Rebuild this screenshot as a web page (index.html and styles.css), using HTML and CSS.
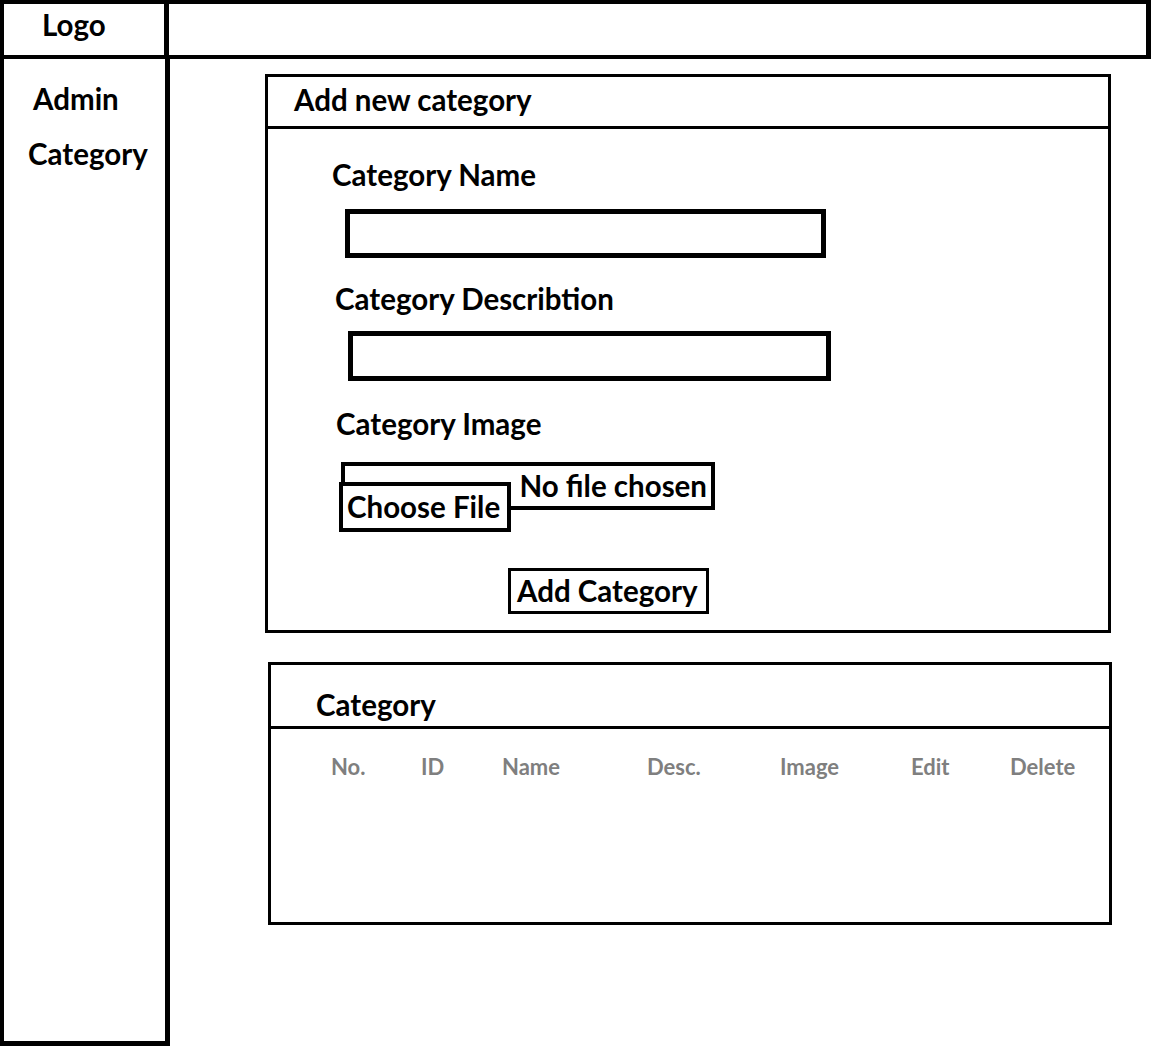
FILE: index.html
```html
<!DOCTYPE html>
<html>
<head>
    <title>Admin - Category</title>
    <link rel="stylesheet" href="styles.css">
</head>
<body>
    <div class="page">
        <header class="top">
            <div class="logo">Logo</div>
            <div class="top-bar"></div>
        </header>
        <div class="main">
            <nav class="sidebar">
                <a class="nav-item nav-admin">Admin</a>
                <a class="nav-item nav-category">Category</a>
            </nav>
            <main class="content">
                <section class="card card-form">
                    <h2 class="card-title">Add new category</h2>
                    <form class="card-body" id="categoryForm">
                        <label class="field-label label-name" for="categoryName">Category Name</label>
                        <input class="text-box box-name" type="text" id="categoryName" name="name">
                        <label class="field-label label-desc" for="categoryDesc">Category Describtion</label>
                        <input class="text-box box-desc" type="text" id="categoryDesc" name="description">
                        <label class="field-label label-image" for="categoryImage">Category Image</label>
                        <div class="file-field">
                            <div class="file-name">No file chosen</div>
                            <div class="file-btn">Choose File</div>
                        </div>
                        <button class="submit-btn" type="submit">Add Category</button>
                    </form>
                </section>
                <section class="card card-list">
                    <h2 class="card-title">Category</h2>
                    <div class="table-head">
                        <span>No.</span>
                        <span>ID</span>
                        <span>Name</span>
                        <span>Desc.</span>
                        <span>Image</span>
                        <span>Edit</span>
                        <span>Delete</span>
                    </div>
                </section>
            </main>
        </div>
    </div>
</body>
</html>
```

FILE: styles.css
```css
* {
    box-sizing: border-box;
}
body {
    margin: 0;
    font-family: Lato, "Open Sans", sans-serif;
    font-weight: bold;
    color: #000;
    background-color: #fff;
}
.page {
    width: 1151px;
}
.top {
    display: flex;
    height: 59px;
}
.logo {
    width: 169px;
    border: 4px solid #000;
    border-right-width: 5px;
    padding: 4px 0 0 38px;
    font-size: 29.5px;
    line-height: 34px;
}
.top-bar {
    flex: 1;
    border: 4px solid #000;
    border-left: 0;
    border-right-width: 5px;
}
.main {
    display: flex;
}
.sidebar {
    width: 170px;
    height: 987px;
    border: 4px solid #000;
    border-top: 0;
    border-right-width: 5px;
    border-bottom-width: 5px;
    display: flex;
    flex-direction: column;
    padding-top: 23px;
}
.nav-item {
    font-size: 29.5px;
    line-height: 34px;
}
.nav-admin {
    padding-left: 29px;
}
.nav-category {
    padding-left: 24px;
    margin-top: 21px;
}
.content {
    padding: 15px 0 0 95px;
}
.card {
    border: 3px solid #000;
}
.card-title {
    margin: 0;
    font-size: 29.5px;
    line-height: 34px;
    border-bottom: 3px solid #000;
}
.card-form {
    width: 846px;
    height: 559px;
}
.card-form .card-title {
    padding: 6px 0 9px 26px;
}
.card-body {
    display: flex;
    flex-direction: column;
    align-items: flex-start;
}
.field-label {
    font-size: 29.5px;
    line-height: 34px;
}
.label-name {
    margin: 29px 0 0 64px;
}
.label-desc {
    margin: 24px 0 0 67px;
}
.label-image {
    margin: 26px 0 0 68px;
}
.text-box {
    border: 5px solid #000;
    background: #fff;
    padding: 0;
}
.box-name {
    margin: 17px 0 0 77px;
    width: 481px;
    height: 49px;
}
.box-desc {
    margin: 15px 0 0 80px;
    width: 483px;
    height: 50px;
}
.file-field {
    margin: 21px 0 0 71px;
    width: 376px;
}
.file-name {
    margin-left: 2px;
    width: 374px;
    height: 48px;
    border: 4px solid #000;
    text-align: right;
    padding-right: 4px;
    font-size: 29.5px;
    line-height: 40px;
}
.file-btn {
    position: relative;
    margin-top: -28px;
    width: 172px;
    height: 50px;
    border: 4px solid #000;
    background: #fff;
    padding-left: 4px;
    font-size: 29.5px;
    line-height: 41px;
}
.submit-btn {
    margin: 36px 0 0 240px;
    width: 201px;
    height: 46px;
    border: 3px solid #000;
    background: #fff;
    padding: 0 0 0 6px;
    text-align: left;
    font-family: inherit;
    font-weight: bold;
    font-size: 29.5px;
    line-height: 38px;
    color: #000;
}
.card-list {
    margin: 29px 0 0 3px;
    width: 844px;
    height: 263px;
}
.card-list .card-title {
    padding: 23px 0 4px 45px;
}
.table-head {
    display: grid;
    grid-template-columns: 90px 81px 145px 133px 131px 99px auto;
    margin-top: 24px;
    padding-left: 60px;
    font-size: 22px;
    line-height: 28px;
    color: #7f7f7f;
}
```
